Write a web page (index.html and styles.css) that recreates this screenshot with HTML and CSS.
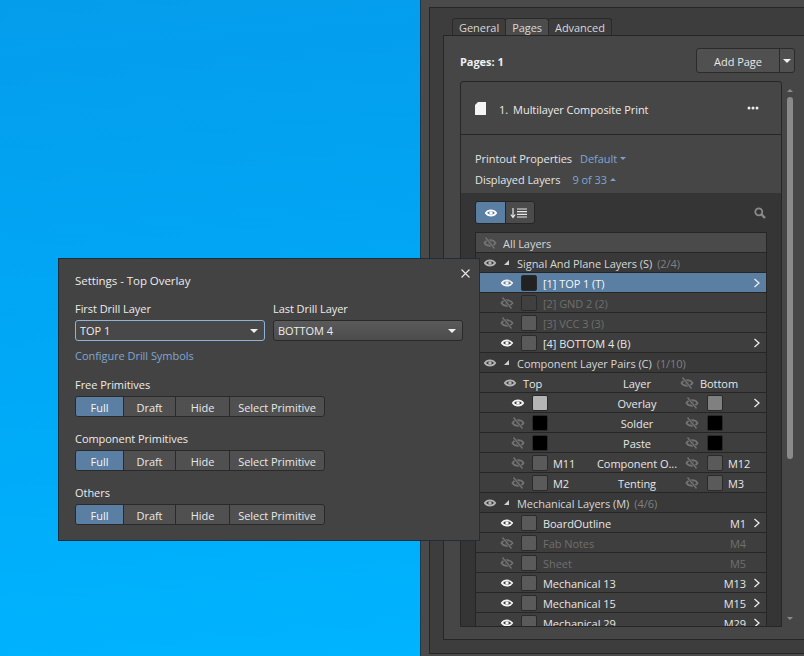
FILE: index.html
```html
<!DOCTYPE html>
<html lang="en">
<head>
  <meta charset="UTF-8" />
  <title>Multilayer Composite Print</title>
  <link rel="stylesheet" href="styles.css">
</head>
<body>
  <svg class="defs" width="0" height="0">
    <symbol id="eye" viewBox="0 0 14 14">
      <path d="M1.8 7 C4 3.6 10 3.6 12.2 7 C10 10.4 4 10.4 1.8 7 Z" fill="none" stroke="currentColor" stroke-width="1.7"/>
      <circle cx="7" cy="7" r="1.7" fill="currentColor"/>
    </symbol>
    <symbol id="eye-off" viewBox="0 0 14 14">
      <path d="M1.4 7 C3.8 3.2 10.2 3.2 12.6 7 C10.2 10.8 3.8 10.8 1.4 7 Z" fill="none" stroke="currentColor" stroke-width="1.6"/>
      <circle cx="7" cy="7" r="1.7" fill="currentColor"/>
      <path d="M2.5 1.5 L11.5 12.5" stroke="var(--row, #3e3e3e)" stroke-width="2.6"/>
      <path d="M2.5 1.5 L11.5 12.5" stroke="currentColor" stroke-width="1.4"/>
    </symbol>
    <symbol id="chev" viewBox="0 0 8 10">
      <path d="M1.5 1 L6 5 L1.5 9" fill="none" stroke="currentColor" stroke-width="1.3"/>
    </symbol>
  </svg>

  <section class="panel">
    <div class="panel-inner">
      <div class="tabs">
        <div class="tab">General</div>
        <div class="tab active">Pages</div>
        <div class="tab">Advanced</div>
      </div>

      <div class="tab-body">
        <div class="pages-head">
          <strong>Pages: 1</strong>
          <div class="add-page">
            <span class="add-label">Add Page</span>
            <span class="add-arrow"><i class="caret"></i></span>
          </div>
        </div>

        <div class="card">
          <div class="card-head">
            <svg class="doc" width="11" height="13" viewBox="0 0 11 13"><path d="M3 0 H11 V13 H0 V3 Z" fill="#f4f4f4"/></svg>
            <span class="doc-num">1.</span>
            <span class="doc-name">Multilayer Composite Print</span>
            <svg class="dots" width="12" height="4" viewBox="0 0 12 4"><circle cx="2" cy="2" r="1.5" fill="#eee"/><circle cx="6" cy="2" r="1.5" fill="#eee"/><circle cx="10" cy="2" r="1.5" fill="#eee"/></svg>
          </div>

          <div class="props">
            <div class="prop"><span>Printout Properties</span><span class="blue val-1">Default</span><i class="mini-down"></i></div>
            <div class="prop"><span>Displayed Layers</span><span class="blue val-2">9 of 33</span><i class="mini-up"></i></div>
          </div>

          <div class="layers">
            <div class="layer-tools">
              <div class="view-toggle">
                <span class="view-on"><svg width="14" height="14"><use href="#eye"/></svg></span>
                <span class="view-sort">
                  <svg width="20" height="12" viewBox="0 0 20 12">
                    <path d="M3 1 V10 M0.8 7.5 L3 10.5 L5.2 7.5" fill="none" stroke="#e8e8e8" stroke-width="1.2"/>
                    <path d="M7 2 H17 M7 4.7 H17 M7 7.3 H17 M7 10 H17" stroke="#e8e8e8" stroke-width="1.2"/>
                  </svg>
                </span>
              </div>
              <svg class="search" width="12" height="12" viewBox="0 0 12 12">
                <circle cx="4.8" cy="4.8" r="3.5" fill="none" stroke="#8a8a8a" stroke-width="1.8"/>
                <path d="M7.5 7.5 L11 11" stroke="#8a8a8a" stroke-width="2.4"/>
              </svg>
            </div>

            <div class="table">
              <div class="row all"><svg class="eye off col-g"><use href="#eye-off"/></svg><span>All Layers</span></div>

              <div class="row group"><svg class="eye mid col-g"><use href="#eye"/></svg><i class="tri"></i><span>Signal And Plane Layers (S)</span><em>(2/4)</em></div>
              <div class="row layer selected"><svg class="eye on"><use href="#eye"/></svg><b class="sw sw-dark"></b><span class="name">[1] TOP 1 (T)</span><span></span><svg class="chev"><use href="#chev"/></svg></div>
              <div class="row layer dim"><svg class="eye off"><use href="#eye-off"/></svg><b class="sw sw-mid"></b><span class="name">[2] GND 2 (2)</span></div>
              <div class="row layer dim"><svg class="eye off"><use href="#eye-off"/></svg><b class="sw sw-grey"></b><span class="name">[3] VCC 3 (3)</span></div>
              <div class="row layer"><svg class="eye on"><use href="#eye"/></svg><b class="sw sw-grey"></b><span class="name">[4] BOTTOM 4 (B)</span><span></span><svg class="chev"><use href="#chev"/></svg></div>

              <div class="row group"><svg class="eye mid col-g"><use href="#eye"/></svg><i class="tri"></i><span>Component Layer Pairs (C)</span><em>(1/10)</em></div>
              <div class="row pair-head">
                <svg class="eye mid"><use href="#eye"/></svg><span>Top</span><span class="mid-col">Layer</span>
                <svg class="eye off"><use href="#eye-off"/></svg><span>Bottom</span>
              </div>
              <div class="row pair"><svg class="eye on"><use href="#eye"/></svg><b class="sw sw-light"></b><span></span><span class="mid-col">Overlay</span><svg class="eye off"><use href="#eye-off"/></svg><b class="sw sw-soft"></b><span></span><svg class="chev"><use href="#chev"/></svg></div>
              <div class="row pair"><svg class="eye off"><use href="#eye-off"/></svg><b class="sw sw-black"></b><span></span><span class="mid-col">Solder</span><svg class="eye off"><use href="#eye-off"/></svg><b class="sw sw-black"></b></div>
              <div class="row pair"><svg class="eye off"><use href="#eye-off"/></svg><b class="sw sw-black"></b><span></span><span class="mid-col">Paste</span><svg class="eye off"><use href="#eye-off"/></svg><b class="sw sw-black"></b></div>
              <div class="row pair"><svg class="eye off"><use href="#eye-off"/></svg><b class="sw sw-grey"></b><span>M11</span><span class="mid-col">Component O...</span><svg class="eye off"><use href="#eye-off"/></svg><b class="sw sw-grey"></b><span>M12</span></div>
              <div class="row pair"><svg class="eye off"><use href="#eye-off"/></svg><b class="sw sw-grey"></b><span>M2</span><span class="mid-col">Tenting</span><svg class="eye off"><use href="#eye-off"/></svg><b class="sw sw-grey"></b><span>M3</span></div>

              <div class="row group"><svg class="eye mid col-g"><use href="#eye"/></svg><i class="tri"></i><span>Mechanical Layers (M)</span><em>(4/6)</em></div>
              <div class="row layer"><svg class="eye on"><use href="#eye"/></svg><b class="sw sw-grey"></b><span class="name">BoardOutline</span><span>M1</span><svg class="chev"><use href="#chev"/></svg></div>
              <div class="row layer dim"><svg class="eye off"><use href="#eye-off"/></svg><b class="sw sw-grey"></b><span class="name">Fab Notes</span><span>M4</span></div>
              <div class="row layer dim"><svg class="eye off"><use href="#eye-off"/></svg><b class="sw sw-grey"></b><span class="name">Sheet</span><span>M5</span></div>
              <div class="row layer"><svg class="eye on"><use href="#eye"/></svg><b class="sw sw-grey"></b><span class="name">Mechanical 13</span><span>M13</span><svg class="chev"><use href="#chev"/></svg></div>
              <div class="row layer"><svg class="eye on"><use href="#eye"/></svg><b class="sw sw-grey"></b><span class="name">Mechanical 15</span><span>M15</span><svg class="chev"><use href="#chev"/></svg></div>
              <div class="row layer"><svg class="eye on"><use href="#eye"/></svg><b class="sw sw-grey"></b><span class="name">Mechanical 29</span><span>M29</span><svg class="chev"><use href="#chev"/></svg></div>
            </div>
          </div>
        </div>

        <div class="scrollbar">
          <i class="mini-up"></i>
          <div class="track"><div class="thumb"></div></div>
          <i class="mini-down"></i>
        </div>
      </div>
    </div>
  </section>

  <section class="dialog">
    <svg class="close" width="9" height="9" viewBox="0 0 9 9"><path d="M0.5 0.5 L8.5 8.5 M8.5 0.5 L0.5 8.5" stroke="#e6e6e6" stroke-width="1.1"/></svg>
    <h1>Settings - Top Overlay</h1>

    <div class="drill">
      <div class="field">
        <label>First Drill Layer</label>
        <div class="select focus"><span>TOP 1</span><i class="caret"></i></div>
      </div>
      <div class="field">
        <label>Last Drill Layer</label>
        <div class="select"><span>BOTTOM 4</span><i class="caret"></i></div>
      </div>
    </div>

    <div class="link">Configure Drill Symbols</div>

    <div class="prim">
      <label>Free Primitives</label>
      <div class="seg"><span class="s1 active">Full</span><span class="s2">Draft</span><span class="s3">Hide</span><span class="s4">Select Primitive</span></div>
    </div>
    <div class="prim">
      <label>Component Primitives</label>
      <div class="seg"><span class="s1 active">Full</span><span class="s2">Draft</span><span class="s3">Hide</span><span class="s4">Select Primitive</span></div>
    </div>
    <div class="prim">
      <label>Others</label>
      <div class="seg"><span class="s1 active">Full</span><span class="s2">Draft</span><span class="s3">Hide</span><span class="s4">Select Primitive</span></div>
    </div>
  </section>
</body>
</html>
```

FILE: styles.css
```css
* {
  box-sizing: border-box;
}

html, body {
  height: 100%;
}

body {
  margin: 0;
  overflow: hidden;
  position: relative;
  background: linear-gradient(175deg, #049dec 0%, #00a8f6 50%, #00b5ff 100%);
  color: #e4e4e4;
  font-family: "Open Sans", "Noto Sans", sans-serif;
  font-size: 11px;
  line-height: 14px;
  letter-spacing: -0.05px;
}

.defs {
  position: absolute;
}

/* Docked panel on the right */

.panel {
  position: absolute;
  top: 0;
  right: 0;
  bottom: 0;
  left: 420px;
  padding: 7px 0 2px 8px;
  background: #4a4a4a;
  border-left: 1px solid #17384d;
}

.panel-inner {
  height: 100%;
  padding: 10px 0 14px 13px;
  background: #3d3d3d;
  border: 1px solid #262626;
  border-right: 0;
  display: flex;
  flex-direction: column;
}

.tabs {
  display: flex;
  height: 18px;
  margin-left: 9px;
}

.tab {
  padding: 2px 6px 0;
  border: 1px solid #2a2a2a;
  border-bottom: 0;
  border-radius: 3px 3px 0 0;
  background: #3d3d3d;
  margin-right: -1px;
  color: #d8d8d8;
}

.tab.active {
  background: #4c4c4c;
}

.tab-body {
  flex: 1;
  position: relative;
  padding: 12px 0 12px 16px;
  background: #464646;
  border: 1px solid #262626;
  border-right: 0;
}

.pages-head {
  display: flex;
  justify-content: space-between;
  align-items: center;
  height: 25px;
  margin-right: 9px;
  color: #f0f0f0;
}

.pages-head strong {
  padding-top: 2px;
}

.add-page {
  display: flex;
  width: 99px;
  height: 25px;
  background: #505050;
  border: 1px solid #2b2b2b;
  border-radius: 3px;
  color: #e8e8e8;
  align-items: center;
}

.add-label {
  flex: 1;
  padding-top: 2px;
  text-align: center;
}

.add-arrow {
  width: 15px;
  height: 100%;
  border-left: 1px solid #2b2b2b;
  display: flex;
  align-items: center;
  justify-content: center;
}

.caret {
  width: 0;
  height: 0;
  border-left: 4px solid transparent;
  border-right: 4px solid transparent;
  border-top: 4px solid #f0f0f0;
}

.mini-down, .mini-up {
  display: block;
  width: 0;
  height: 0;
  border-left: 3px solid transparent;
  border-right: 3px solid transparent;
}

.mini-down {
  border-top: 3px solid #7d9fc4;
}

.mini-up {
  border-bottom: 3px solid #7d9fc4;
}

.card {
  width: 322px;
  height: 546px;
  margin-top: 8px;
  border: 1px solid #262626;
  border-radius: 3px 3px 0 0;
  overflow: hidden;
  background: #464646;
}

.card-head {
  height: 53px;
  padding: 0 14px;
  display: flex;
  align-items: center;
  border-bottom: 1px solid #262626;
  color: #ececec;
}

.doc-num {
  margin-left: 13px;
  padding-top: 3px;
}

.doc-name {
  margin-left: 5px;
  padding-top: 3px;
  flex: 1;
}

.dots {
  margin-right: 8px;
}

.props {
  height: 58px;
  padding: 13px 14px 0;
}

.prop {
  display: flex;
  align-items: center;
  height: 21px;
}

.blue {
  color: #7fa6d2;
}

.val-1 {
  margin: 0 3px 0 8px;
}

.val-2 {
  margin: 0 3px 0 12px;
}

.layers {
  height: 433px;
  padding: 8px 14px 0;
  background: #353535;
}

.layer-tools {
  display: flex;
  justify-content: space-between;
  align-items: center;
  height: 23px;
  margin-bottom: 8px;
}

.view-toggle {
  display: flex;
  width: 60px;
  height: 23px;
  border: 1px solid #262626;
  border-radius: 3px;
  overflow: hidden;
}

.view-on {
  width: 29px;
  background: #5b7ea3;
  color: #fff;
  display: flex;
  align-items: center;
  justify-content: center;
}

.view-sort {
  flex: 1;
  background: #4b4b4b;
  border-left: 1px solid #262626;
  display: flex;
  align-items: center;
  justify-content: center;
}

.search {
  margin-right: 1px;
}

/* Layer table */

.table {
  width: 292px;
  border: 1px solid #262626;
  border-bottom: 0;
}

.row {
  height: 20px;
  border-bottom: 1px solid #262626;
  background: #3e3e3e;
  color: #e6e6e6;
  white-space: nowrap;
}

.row span, .row em {
  padding-top: 2px;
}

.eye {
  width: 14px;
  height: 14px;
}

.eye.on {
  color: #f4f4f4;
}

.eye.mid {
  color: #b4b4b4;
}

.eye.off {
  color: #727272;
}

.col-g {
  margin-left: 7px;
}

.row.all, .row.group {
  display: flex;
  align-items: center;
}

.row.all {
  --row: #4a4a4a;
  background: #4a4a4a;
  color: #d6d6d6;
}

.row.all span {
  margin-left: 6px;
}

.row.group {
  background: #393939;
  color: #d6d6d6;
}

.row.group em {
  font-style: normal;
  color: #808080;
  margin-left: 5px;
}

.tri {
  width: 0;
  height: 0;
  margin: 0 8px 0 7px;
  border-bottom: 5px solid #cfcfcf;
  border-left: 5px solid transparent;
}

.row.layer {
  display: grid;
  grid-template-columns: 45px 16px 1fr auto 20px;
  align-items: center;
}

.row.layer .eye {
  justify-self: end;
  margin-right: 7px;
}

.row.layer .name {
  padding-left: 6px;
}

.row.selected {
  background: #5b7ea3;
  color: #f6f6f6;
}

.row.dim {
  color: #6f6f6f;
}

.chev {
  width: 8px;
  height: 10px;
  color: #ececec;
  justify-self: end;
  margin-right: 5px;
}

.sw {
  display: block;
  width: 16px;
  height: 16px;
  border: 1px solid #2a2a2a;
  border-radius: 2px;
}

.sw-dark { background: #222; }
.sw-mid { background: #404040; }
.sw-grey { background: #5a5a5a; }
.sw-light { background: #b5b5b5; }
.sw-soft { background: #808080; }
.sw-black { background: #000; }

.row.pair, .row.pair-head {
  display: grid;
  align-items: center;
}

.row.pair {
  grid-template-columns: 56px 16px 42px 94px 23px 16px 1fr 18px;
}

.row.pair > .eye:first-child {
  justify-self: end;
  margin-right: 7px;
}

.row.pair > span:nth-child(3) {
  padding-left: 5px;
}

.row.pair > span:nth-child(7) {
  padding-left: 5px;
}

.row.pair > .eye:nth-child(5) {
  margin-left: 1px;
}

.row.pair-head {
  grid-template-columns: 47px 76px 76px 25px 1fr;
}

.row.pair-head > .eye:first-child {
  justify-self: end;
  margin-right: 6px;
}

.row.pair-head > .eye:nth-child(4) {
  margin-left: 5px;
}

.mid-col {
  text-align: center;
}

/* Scrollbar beside the card */

.scrollbar {
  position: absolute;
  top: 53px;
  left: 342px;
  height: 531px;
  width: 7px;
  display: flex;
  flex-direction: column;
  align-items: center;
  justify-content: space-between;
}

.scrollbar .mini-up {
  border-bottom-color: #8a8a8a;
}

.scrollbar .mini-down {
  border-top-color: #8a8a8a;
}

.track {
  flex: 1;
  width: 6px;
  margin-top: 5px;
}

.thumb {
  height: 362px;
  background: #8a8a8a;
  border-radius: 3px;
}

/* Floating settings dialog */

.dialog {
  position: absolute;
  top: 258px;
  left: 58px;
  width: 422px;
  height: 283px;
  padding: 14px 16px 0;
  background: #434343;
  border: 1px solid #1f2f3a;
}

.dialog h1 {
  margin: 0;
  font-size: 11.5px;
  font-weight: 400;
  line-height: 16px;
  color: #ececec;
}

.close {
  position: absolute;
  top: 10px;
  right: 9px;
}

.drill {
  display: flex;
  gap: 8px;
  margin-top: 13px;
}

.field {
  width: 190px;
}

.dialog label {
  display: block;
  color: #ececec;
  height: 16px;
  line-height: 14px;
}

.select {
  height: 21px;
  margin-top: 2px;
  padding: 0 6px 0 4px;
  display: flex;
  justify-content: space-between;
  align-items: center;
  background: linear-gradient(#5a5a5a, #4c4c4c);
  border: 1px solid #2a2a2a;
  border-radius: 3px;
  color: #ececec;
}

.select.focus {
  background: #484848;
  border-color: #8fb2d6;
}

.link {
  margin-top: 8px;
  color: #7fa6d2;
}

.prim {
  margin-top: 15px;
}

.seg {
  display: flex;
  width: 250px;
  height: 21px;
  margin-top: 2px;
  border: 1px solid #2a2a2a;
  border-radius: 3px;
  overflow: hidden;
  background: #505050;
}

.seg span {
  display: flex;
  align-items: center;
  justify-content: center;
  padding-top: 2px;
  border-left: 1px solid #2a2a2a;
  color: #e8e8e8;
}

.seg .s1 {
  width: 47px;
  border-left: 0;
}

.seg .s2 {
  width: 52px;
}

.seg .s3 {
  width: 54px;
}

.seg .s4 {
  flex: 1;
}

.seg .active {
  background: #5b7ea3;
  color: #f6f6f6;
}
```
